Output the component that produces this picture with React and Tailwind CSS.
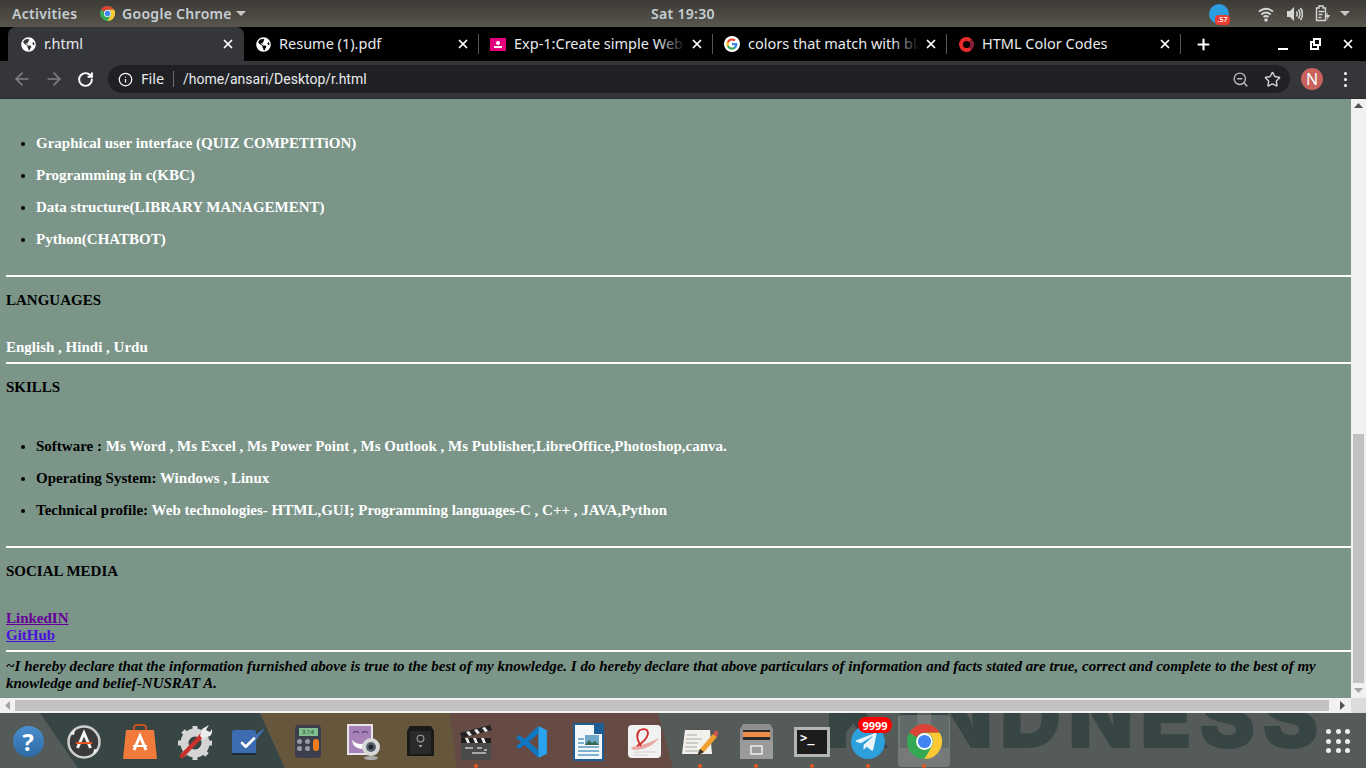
import { FaGlobeAmericas, FaTelegramPlane } from "react-icons/fa";
import { ZoomOut, Star, RotateCw, ArrowLeft, ArrowRight, Info, X, Plus, Check } from "lucide-react";

const ChromeLogo = ({ size = 16 }) => (
  <svg width={size} height={size} viewBox="0 0 48 48">
    <circle cx="24" cy="24" r="24" fill="#34a853" />
    <path d="M24 0a24 24 0 0 1 20.800 12H24a12 12 0 0 0-10.400 6L3.200 12A24 24 0 0 1 24 0z" fill="#db4437" />
    <path d="M44.800 12A24 24 0 0 1 24 48l10.400-18A12 12 0 0 0 24 12z" fill="#fcc934" />
    <circle cx="24" cy="24" r="11.500" fill="#fff" />
    <circle cx="24" cy="24" r="9" fill="#4285f4" />
  </svg>
);

const GoogleLogo = () => (
  <svg width="16" height="16" viewBox="0 0 48 48" className="rounded-full bg-white">
    <path d="M40 24.500c0-1.200-.1-2.300-.3-3.400H24v6.500h9a7.700 7.700 0 0 1-3.300 5v4.200h5.400c3.100-2.900 4.900-7.100 4.900-12.300z" fill="#4285f4" />
    <path d="M24 41c4.500 0 8.300-1.500 11.100-4.100l-5.400-4.200c-1.500 1-3.400 1.600-5.700 1.600-4.400 0-8.100-3-9.400-6.900H9v4.300A17 17 0 0 0 24 41z" fill="#34a853" />
    <path d="M14.600 27.400a10 10 0 0 1 0-6.800v-4.300H9a17 17 0 0 0 0 15.400z" fill="#fbbc05" />
    <path d="M24 13.700c2.500 0 4.700.9 6.400 2.500l4.800-4.800A17 17 0 0 0 9 16.300l5.600 4.300c1.300-3.900 5-6.900 9.400-6.900z" fill="#ea4335" />
  </svg>
);

const Tab = ({ icon, title, width, active, fade }) => (
  <div className={`relative flex h-[34px] shrink-0 items-center ${active ? "rounded-t-lg bg-[#35363a]" : "bg-black"}`} style={{ width }}>
    <span className={`flex w-[16px] shrink-0 justify-center ${active ? "ml-[12px]" : "ml-[11px]"}`}>{icon}</span>
    <span className="ml-[8px] min-w-0 flex-1 overflow-hidden whitespace-nowrap text-[14.5px] text-[#e8eaed]">{title}</span>
    {fade && <span className="absolute right-[26px] top-2 h-5 w-7 bg-gradient-to-r from-transparent to-black" />}
    <X size={14} strokeWidth={3} className={`relative ml-1 shrink-0 text-white ${active ? "mr-[9px]" : "mr-[8px]"}`} />
  </div>
);

const Divider = () => <div className="h-[20px] w-px shrink-0 bg-[#55565a]" />;

const Hr = ({ className = "" }) => <div className={`h-[2px] bg-white ${className}`} />;

const Dock = ({ children, dot, className = "" }) => (
  <div className={`relative flex h-[55px] w-[56px] shrink-0 items-center justify-center pt-[2px] ${className}`}>
    {children}
    {dot && <span className="absolute bottom-0 left-1/2 h-1 w-1 -translate-x-1/2 rounded-full bg-[#e95420]" />}
  </div>
);

const ArrowUp = ({ color = "#505050" }) => (
  <svg width="9" height="5" viewBox="0 0 9 5"><path d="M4.500 0L9 5H0z" fill={color} /></svg>
);

const ArrowSide = ({ flip, color = "#505050" }) => (
  <svg width="5" height="9" viewBox="0 0 5 9"><path d={flip ? "M0 0L5 4.500 0 9z" : "M5 0L0 4.500 5 9z"} fill={color} /></svg>
);

const App = () => {
  return (
    <div className="flex h-[768px] w-[1366px] flex-col overflow-hidden bg-black font-['Noto_Sans',sans-serif]">
      {/* gnome top bar */}
      <div className="flex h-[27px] shrink-0 items-center bg-gradient-to-b from-[#3d3b36] to-[#58554d] text-[14px] font-semibold text-[#c6ced4]">
        <span className="ml-3 w-[88px] tracking-[0.3px]">Activities</span>
        <ChromeLogo size={15} />
        <span className="ml-[7px] w-[114px] whitespace-nowrap tracking-[0.3px]">Google Chrome</span>
        <span className="h-0 w-0 border-x-[5px] border-t-[5px] border-x-transparent border-t-[#c8c8c8]" />
        <span className="ml-[405px] w-[65px] whitespace-nowrap tracking-[0.3px]">Sat 19:30</span>
        <div className="relative ml-[493px] h-[20px] w-[20px] rounded-full bg-[#2a9ee0]">
          <span className="absolute -right-[1px] bottom-[-1px] flex h-[10px] w-[15px] items-center justify-center rounded-sm bg-[#ee3a32] text-[7px] leading-none text-white">.57</span>
        </div>
        <svg width="16" height="16" viewBox="0 0 16 16" className="ml-[29px]" fill="none" stroke="#d6d6d6" strokeWidth="1.800">
          <path d="M1 5.500Q8 0 15 5.500M3.300 8.500Q8 4.500 12.700 8.500M5.500 11Q8 9 10.500 11" />
          <circle cx="8" cy="14" r="1.800" fill="#d6d6d6" stroke="none" />
        </svg>
        <svg width="16" height="16" viewBox="0 0 16 16" className="ml-[13px]" fill="none" stroke="#d6d6d6" strokeWidth="1.500">
          <path d="M0 5h3l4-4v14l-4-4H0z" fill="#d6d6d6" stroke="none" />
          <path d="M9.500 5.500q1.500 2.500 0 5M11.500 3.500q3 4.500 0 9M13.500 2q4 6 0 12" />
        </svg>
        <svg width="15" height="17" viewBox="0 0 15 17" className="ml-[12px]" fill="none" stroke="#d6d6d6" strokeWidth="1.400">
          <path d="M1.500 3h2.500V1h4v2h2.500v12.500h-9z" />
          <path d="M3.500 6.500h6M3.500 9.500h4M3.500 12.500h3" />
          <path d="M13 7l-3 5h2.500l-1 4 3.500-6h-2.500z" fill="#d6d6d6" stroke="none" />
        </svg>
        <span className="ml-[10px] h-0 w-0 border-x-[5px] border-t-[5px] border-x-transparent border-t-[#c8c8c8]" />
      </div>

      {/* tab strip */}
      <div className="flex h-[34px] shrink-0 items-center bg-black pl-2">
        <Tab active width={236} title="r.html" icon={<FaGlobeAmericas size={15} className="text-white" />} />
        <Tab width={234} title="Resume (1).pdf" icon={<FaGlobeAmericas size={15} className="text-white" />} />
        <Divider />
        <Tab width={233} fade title="Exp-1:Create simple Web page" icon={<span className="flex h-[13px] w-[16px] flex-col items-center justify-center gap-px bg-[#e6007e]"><span className="h-[4px] w-[4px] rounded-full bg-white" /><span className="h-[2px] w-[8px] bg-white" /></span>} />
        <Divider />
        <Tab width={233} fade title="colors that match with black" icon={<GoogleLogo />} />
        <Divider />
        <Tab width={233} title="HTML Color Codes" icon={<span className="h-[15px] w-[15px] rounded-full border-[4px] border-[#ea2b2b] border-r-[#8a1c3a]" />} />
        <Divider />
        <Plus size={17} strokeWidth={3} className="ml-[14px] text-white" />
        <div className="ml-[66px] flex items-center text-white">
          <span className="mt-[10px] h-[2px] w-[10px] bg-white" />
          <span className="relative ml-[22px] mt-[2px] h-[9px] w-[9px] border-2 border-white">
            <span className="absolute -right-[4px] -top-[5px] h-[8px] w-[8px] border-2 border-white bg-black" />
          </span>
          <X size={14} strokeWidth={3} className="ml-[22px]" />
        </div>
      </div>

      {/* toolbar */}
      <div className="flex h-[38px] shrink-0 items-center border-b border-[#2b2c2f] bg-[#35363a] pb-[1px]">
        <ArrowLeft size={20} strokeWidth={2} className="ml-[12px] text-[#808184]" />
        <ArrowRight size={20} strokeWidth={2} className="ml-[12px] text-[#808184]" />
        <RotateCw size={17} strokeWidth={2.8} className="ml-[13px] text-white" />
        <div className="ml-[14px] flex h-[28px] w-[1182px] items-center rounded-full bg-[#202124] text-[14.5px] text-[#e8eaed]">
          <Info size={15} strokeWidth={2} className="ml-[10px] text-white" />
          <span className="ml-[8px] w-[24px]">File</span>
          <span className="ml-[8px] h-[16px] w-px bg-[#6a6b6e]" />
          <span className="ml-[9px] font-['Roboto',sans-serif] text-[14px]">/home/ansari/Desktop/r.html</span>
          <ZoomOut size={17} strokeWidth={2} className="ml-auto text-[#b9babc]" />
          <Star size={17} strokeWidth={2} className="ml-[15px] mr-[9px] text-[#d0d1d3]" />
        </div>
        <span className="ml-[11px] flex h-[22px] w-[22px] items-center justify-center rounded-full bg-[#c8625c] text-[16px] leading-none text-white">N</span>
        <span className="ml-[21px] flex flex-col gap-[3px]">
          <span className="h-[3px] w-[3px] rounded-full bg-white" />
          <span className="h-[3px] w-[3px] rounded-full bg-white" />
          <span className="h-[3px] w-[3px] rounded-full bg-white" />
        </span>
      </div>

      {/* page and its scrollbar */}
      <div className="flex h-[599px] shrink-0">
        <main className="w-[1351px] overflow-hidden bg-[#7b9589] pl-[6px] pt-[36px] font-['Liberation_Serif',serif] text-[15px] font-bold leading-[17px] text-black">
          <ul className="list-disc pl-[30px]">
            <li className="mb-[15px]"><span className="text-white">Graphical user interface (QUIZ COMPETITiON)</span></li>
            <li className="mb-[15px]"><span className="text-white">Programming in c(KBC)</span></li>
            <li className="mb-[15px]"><span className="text-white">Data structure(LIBRARY MANAGEMENT)</span></li>
            <li><span className="text-white">Python(CHATBOT)</span></li>
          </ul>
          <Hr className="mt-[27px]" />
          <p className="mt-[15px]">LANGUAGES</p>
          <p className="mt-[30px] text-white">English , Hindi , Urdu</p>
          <Hr className="mt-[6px]" />
          <p className="mt-[15px]">SKILLS</p>
          <ul className="mt-[42px] list-disc pl-[30px]">
            <li className="mb-[15px]">Software : <span className="text-white">Ms Word , Ms Excel , Ms Power Point , Ms Outlook , Ms Publisher,LibreOffice,Photoshop,canva.</span></li>
            <li className="mb-[15px]">Operating System: <span className="text-white">Windows , Linux</span></li>
            <li>Technical profile: <span className="text-white">Web technologies- HTML,GUI; Programming languages-C , C++ , JAVA,Python</span></li>
          </ul>
          <Hr className="mt-[27px]" />
          <p className="mt-[15px]">SOCIAL MEDIA</p>
          <a className="mt-[30px] block text-[#660099] underline">LinkedIN</a>
          <a className="block text-[#4a12dc] underline">GitHub</a>
          <Hr className="mt-[6px]" />
          <p className="mt-[6px] italic">~I hereby declare that the information furnished above is true to the best of my knowledge. I do hereby declare that above particulars of information and facts stated are true, correct and complete to the best of my knowledge and belief-NUSRAT A.</p>
        </main>
        <div className="flex w-[15px] flex-col items-center bg-[#f1f1f1]">
          <span className="mt-[4px] flex"><ArrowUp /></span>
          <div className="mt-[326px] h-[249px] w-[11px] bg-[#c1c1c1]" />
          <span className="mt-[5px] flex rotate-180"><ArrowUp color="#a3a3a3" /></span>
        </div>
      </div>

      {/* horizontal scrollbar */}
      <div className="flex h-[15px] shrink-0 items-center bg-[#f1f1f1]">
        <span className="ml-[5px] flex"><ArrowSide color="#a3a3a3" /></span>
        <div className="ml-[5px] h-[11px] w-[1314px] bg-[#c1c1c1]" />
        <span className="ml-[11px] flex"><ArrowSide flip /></span>
        <div className="ml-auto h-[15px] w-[15px] bg-[#dcdcdc]" />
      </div>

      {/* dock with wallpaper behind it */}
      <div className="relative flex h-[55px] shrink-0 overflow-hidden bg-[#545b58]">
        <svg className="absolute inset-0" width="1366" height="55" viewBox="0 0 1366 55">
          <polygon points="40,0 260,0 285,55 78,55" fill="#374544" />
          <polygon points="260,0 450,0 457,55 285,55" fill="#66563c" />
          <polygon points="450,0 658,0 673,55 457,55" fill="#664b45" />
        </svg>
        <span className="absolute left-[825px] top-[-44px] whitespace-nowrap font-['Inter',sans-serif] text-[86px] font-black leading-[96px] tracking-[6px] text-[#374544]">KINDNESS</span>

        <Dock>
          <span className="flex h-[31px] w-[31px] items-center justify-center rounded-full bg-gradient-to-b from-[#4a8fd0] to-[#2b6aa5] text-[24px] font-bold leading-none text-white">?</span>
        </Dock>
        <Dock>
          <svg width="34" height="34" viewBox="0 0 34 34">
            <circle cx="17" cy="17" r="15.500" fill="#3a3a3a" stroke="#cfcfcf" strokeWidth="2.500" />
            <path d="M10.500 23L17 8l6.500 15" fill="none" stroke="#f4f4f4" strokeWidth="3" />
            <path d="M9 18h16" stroke="#e95420" strokeWidth="2" />
            <path d="M27 24l4 1-5 5z" fill="#eee" />
            <path d="M7 10L3 9l5-5z" fill="#eee" />
          </svg>
        </Dock>
        <Dock>
          <svg width="34" height="35" viewBox="0 0 34 35">
            <path d="M11 8V4q0-3 3-3h6q3 0 3 3v4" fill="none" stroke="#c8501f" strokeWidth="2" />
            <path d="M3 6h28l3 29H0z" fill="#ef7a3b" />
            <path d="M11 26L17 12l6 14" fill="none" stroke="#fff" strokeWidth="3" />
            <path d="M10 22h14" stroke="#fff" strokeWidth="2" />
          </svg>
        </Dock>
        <Dock>
          <svg width="36" height="36" viewBox="0 0 36 36">
            <circle cx="17" cy="19" r="10.500" fill="none" stroke="#d4d4d4" strokeWidth="8" />
            <path d="M17 2v4M17 32v4M0 19h5M29 19h5M5 7l3 3M26 28l3 3M5 31l3-3" stroke="#d4d4d4" strokeWidth="5" />
            <path d="M4 32L24 11" stroke="#c8312b" strokeWidth="4.500" strokeLinecap="round" />
            <path d="M22 12l2-7 7-4-3 5 4 2 2-3q1 7-5 8l-4 2z" fill="#ececec" />
          </svg>
        </Dock>
        <Dock className="-translate-x-[4px]">
          <svg width="34" height="28" viewBox="0 0 34 28">
            <path d="M22 9L32 1l1 1-8 10z" fill="#3f72b0" />
            <rect x="1" y="2" width="24" height="24" rx="3" fill="#3b6db0" />
            <rect x="1" y="25" width="24" height="2" fill="#1e2b3c" />
          </svg>
          <Check size={18} strokeWidth={3.5} className="absolute left-[19px] top-[21px] text-white" />
        </Dock>
        <Dock>
          <div className="flex h-[33px] w-[26px] flex-col items-center rounded-sm bg-[#3c3d4d] pt-[3px]">
            <span className="flex h-[8px] w-[19px] items-center justify-center bg-[#7fbf8f] text-[6px] leading-none text-[#23402c]">3.14</span>
            <div className="mt-[3px] grid grid-cols-3 gap-[2px]">
              <span className="h-[5px] w-[5px] rounded-full bg-[#9a9aa5]" />
              <span className="h-[5px] w-[5px] rounded-full bg-[#9a9aa5]" />
              <span className="row-span-2 h-[12px] w-[6px] rounded-sm bg-[#f07b1a]" />
              <span className="h-[5px] w-[5px] rounded-full bg-[#9a9aa5]" />
              <span className="h-[5px] w-[5px] rounded-full bg-[#9a9aa5]" />
            </div>
          </div>
        </Dock>
        <Dock>
          <svg width="34" height="36" viewBox="0 0 34 36">
            <rect x="0" y="0" width="26" height="31" fill="#e8e4ec" />
            <rect x="2" y="2" width="22" height="27" fill="#a682b8" />
            <path d="M5 16q8 8 18 0q-1 8-9 9q-8-1-9-9z" fill="#fff" />
            <path d="M6 9q3-3 6 0M15 9q3-3 6 0" fill="none" stroke="#6b4b7c" strokeWidth="1.500" />
            <circle cx="24" cy="23" r="9" fill="#d8d8d8" />
            <circle cx="24" cy="23" r="5" fill="#5a6470" />
            <circle cx="24" cy="23" r="2.500" fill="#1d2530" />
            <ellipse cx="24" cy="34" rx="7" ry="2" fill="#aaa" />
          </svg>
        </Dock>
        <Dock>
          <svg width="27" height="31" viewBox="0 0 28 32">
            <path d="M3 0h22l3 5v26H0V5z" fill="#1a1a1a" />
            <rect x="3" y="5" width="22" height="24" fill="#2a2a2a" />
            <circle cx="14" cy="13" r="3.500" fill="none" stroke="#999" strokeWidth="1.200" />
            <path d="M12 20h4l-2 2z" fill="#ccc" />
          </svg>
        </Dock>
        <Dock dot>
          <svg width="32" height="36" viewBox="0 0 32 36">
            <path d="M0 9L30 1l2 5L2 14z" fill="#222" />
            <path d="M6 8l3-1 3 4-3 1zM14 6l3-1 3 4-3 1zM22 4l3-1 3 4-3 1z" fill="#e8e8e8" />
            <rect x="1" y="14" width="30" height="5" fill="#1d1d1d" />
            <path d="M5 14h3l2 5H7zM13 14h3l2 5h-3zM21 14h3l2 5h-3z" fill="#e8e8e8" />
            <rect x="1" y="19" width="30" height="17" fill="#4a4a4a" />
            <path d="M5 24h8M17 24h5M12 29h14M24 26h3" stroke="#c8c8c8" strokeWidth="1.500" />
          </svg>
        </Dock>
        <Dock>
          <svg width="34" height="34" viewBox="0 0 32 32">
            <path d="M22 1l8 4v22l-8 4z" fill="#2aa3ee" />
            <path d="M22 1L9 13.500 4 9.500 1 12l5 4-5 4 3 2.500 5-4L22 31v-7l-9-8 9-8z" fill="#0f78c2" />
          </svg>
        </Dock>
        <Dock>
          <svg width="31" height="38" viewBox="0 0 31 38">
            <path d="M0 0h21l10 10v28H0z" fill="#1d5f94" />
            <path d="M2 2h19v9h8v25H2z" fill="#f4f7fa" />
            <path d="M21 0h10v10z" fill="#1d5f94" />
            <rect x="12" y="12" width="14" height="10" fill="#6fa9c9" />
            <path d="M12 22l4-5 3 3 3-2 4 4z" fill="#37674e" />
            <path d="M5 16h6M5 20h6M5 24h21M5 28h21M5 32h21" stroke="#7fb1d3" strokeWidth="2" />
          </svg>
        </Dock>
        <Dock>
          <svg width="33" height="34" viewBox="0 0 33 34">
            <rect width="33" height="33" rx="4" fill="#f1f1f1" />
            <path d="M3 22Q18 20 31 13Q22 25 5 25" fill="#e7a9a5" />
            <path d="M13 21Q6 10 12 5Q20 2 20 9Q18 16 9 21" fill="none" stroke="#cf2a27" strokeWidth="1.800" />
            <path d="M6 27h22M6 30h14" stroke="#d0d0d0" strokeWidth="1" />
          </svg>
        </Dock>
        <Dock dot>
          <svg width="36" height="32" viewBox="0 0 36 32">
            <path d="M3 4h25l2 24H0z" fill="#f2f0ea" />
            <path d="M4 3h23" stroke="#555" strokeWidth="2" strokeDasharray="1.500 1.500" />
            <path d="M5 9h10M4 13h16M4 17h12M3 21h12M3 25h14" stroke="#a8a8a8" strokeWidth="1" />
            <path d="M15 30l3-7 13-15 4 3-13 15z" fill="#f0a030" />
            <path d="M31 8l2-3q2-1 3 1l-1 5z" fill="#d9534f" />
            <path d="M15 30l3-7 4 3z" fill="#333" />
          </svg>
        </Dock>
        <Dock dot>
          <svg width="33" height="35" viewBox="0 0 33 35">
            <path d="M3 0h27l3 5v30H0V5z" fill="#8f8f8f" />
            <rect x="3" y="6" width="27" height="10" fill="#2c2c2c" />
            <rect x="3" y="8" width="27" height="5" fill="#ee8c4a" />
            <rect x="0" y="16" width="33" height="19" fill="#9b9b9b" />
            <rect x="11" y="22" width="11" height="8" fill="none" stroke="#eee" strokeWidth="1.500" />
          </svg>
        </Dock>
        <Dock dot>
          <div className="flex h-[30px] w-[36px] items-start border-[3px] border-[#b5b5b5] bg-[#1c1c1c] px-[3px] pt-[2px] font-['DejaVu_Sans_Mono',monospace] text-[12px] font-bold leading-[13px] text-white">&gt;_</div>
        </Dock>
        <Dock dot>
          <span className="flex h-[34px] w-[34px] items-center justify-center rounded-full bg-[#2d9fdb]">
            <FaTelegramPlane size={24} className="-translate-x-[2px] text-[#e8f4fa]" />
          </span>
          <span className="absolute left-[18px] top-[4px] flex h-[16px] w-[34px] items-center justify-center rounded-full bg-[#ff0000] text-[11px] font-bold leading-none text-white">9999</span>
        </Dock>
        <Dock dot>
          <span className="absolute left-[2px] top-[2px] h-[52px] w-[52px] rounded bg-white/20" />
          <span className="relative flex"><ChromeLogo size={35} /></span>
        </Dock>

        <div className="ml-auto mr-[16px] grid grid-cols-3 content-center gap-[4.500px] pt-[1px]">
          {[0, 1, 2, 3, 4, 5, 6, 7, 8].map((i) => (
            <span key={i} className="h-[5px] w-[5px] rounded-full bg-[#eeeeee]" />
          ))}
        </div>
      </div>
    </div>
  );
};

export default App;
